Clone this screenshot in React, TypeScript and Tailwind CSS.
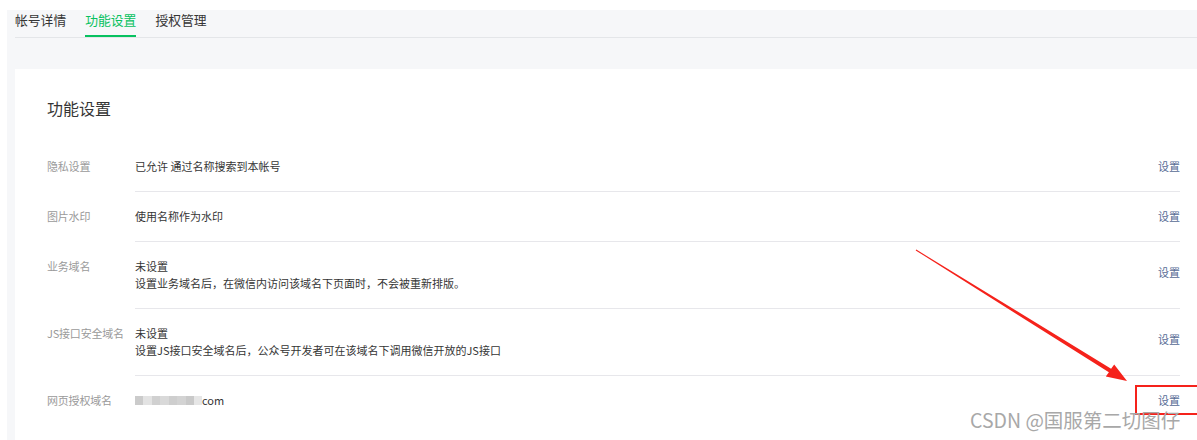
import React from "react";

const font = { fontFamily: '"Noto Sans CJK SC", "Noto Sans", "Liberation Sans", sans-serif' };

type Row = { label: string; lines: React.ReactNode[] };

const rows: Row[] = [
  { label: "隐私设置", lines: ["已允许 通过名称搜索到本帐号"] },
  { label: "图片水印", lines: ["使用名称作为水印"] },
  { label: "业务域名", lines: ["未设置", "设置业务域名后，在微信内访问该域名下页面时，不会被重新排版。"] },
  { label: "JS接口安全域名", lines: ["未设置", "设置JS接口安全域名后，公众号开发者可在该域名下调用微信开放的JS接口"] },
  {
    label: "网页授权域名",
    lines: [
      <span key="d" className="inline-flex items-center">
        <span className="inline-flex h-[9px] w-[67px]">
          <span className="w-[8px] bg-[#cbcbcb]" />
          <span className="w-[9px] bg-[#e3e3e3]" />
          <span className="w-[8px] bg-[#d0d0d0]" />
          <span className="w-[9px] bg-[#d9d9d9]" />
          <span className="w-[8px] bg-[#cecece]" />
          <span className="w-[9px] bg-[#d3d3d3]" />
          <span className="w-[8px] bg-[#c9c9c9]" />
          <span className="w-[8px] bg-[#e6e6e6]" />
        </span>
        <span>com</span>
      </span>,
    ],
  },
];

export default function App() {
  return (
    <div className="relative h-[440px] w-[1197px] overflow-hidden bg-white" style={font}>
      <div className="ml-[7px] mt-[10px] h-[430px] bg-[#f6f7f9] pl-[8px]">
        <div className="flex gap-[19px] border-b border-[#e4e6e9] text-[12.8px] text-[#353535]">
          <div className="pt-[3px] pb-[8px] leading-[14px] border-b-2 border-transparent">帐号详情</div>
          <div className="pt-[3px] pb-[8px] leading-[14px] border-b-2 border-[#07c160] text-[#07c160]">功能设置</div>
          <div className="pt-[3px] pb-[8px] leading-[14px] border-b-2 border-transparent">授权管理</div>
        </div>
        <div className="mt-[31px] h-[400px] bg-white pl-[32px] pr-[17px] pt-[29px]">
          <div className="text-[16px] leading-[20px] text-[#353535]">功能设置</div>
          <div className="mt-[24px] text-[11px] leading-[17px]">
            {rows.map((r, i) => (
              <div key={i} className="flex">
                <div className="w-[88px] shrink-0 pt-4 text-[#9a9a9a] tracking-[-0.2px]">{r.label}</div>
                <div
                  className={
                    "flex flex-1 items-center justify-between py-4 " +
                    (i < rows.length - 1 ? "border-b border-[#e7e7eb]" : "")
                  }
                >
                  <div className="text-[#353535]">
                    {r.lines.map((l, j) => (
                      <div key={j}>{l}</div>
                    ))}
                  </div>
                  {r.lines.length > 1 ? (
                    <a className="-translate-y-[3px] text-[#576b95]">设置</a>
                  ) : (
                    <a className="text-[#576b95]">设置</a>
                  )}
                </div>
              </div>
            ))}
          </div>
        </div>
      </div>

      <svg className="pointer-events-none absolute left-0 top-0" width="1197" height="440">
        <polygon
          points="916.3,249.6 1111.1,368.8 1114.2,364.4 1127,381 1105.8,376.6 1108.9,372.2 915.7,250.4"
          fill="#f5221b"
        />
        <rect x="1136" y="386" width="70" height="28" fill="none" stroke="#f5221b" strokeWidth="2" />
      </svg>

      <div className="pointer-events-none absolute left-[970px] top-[409px] whitespace-nowrap text-[19.5px] leading-[22px] text-[#a8a8a8]">
        CSDN @国服第二切图仔
      </div>
    </div>
  );
}
